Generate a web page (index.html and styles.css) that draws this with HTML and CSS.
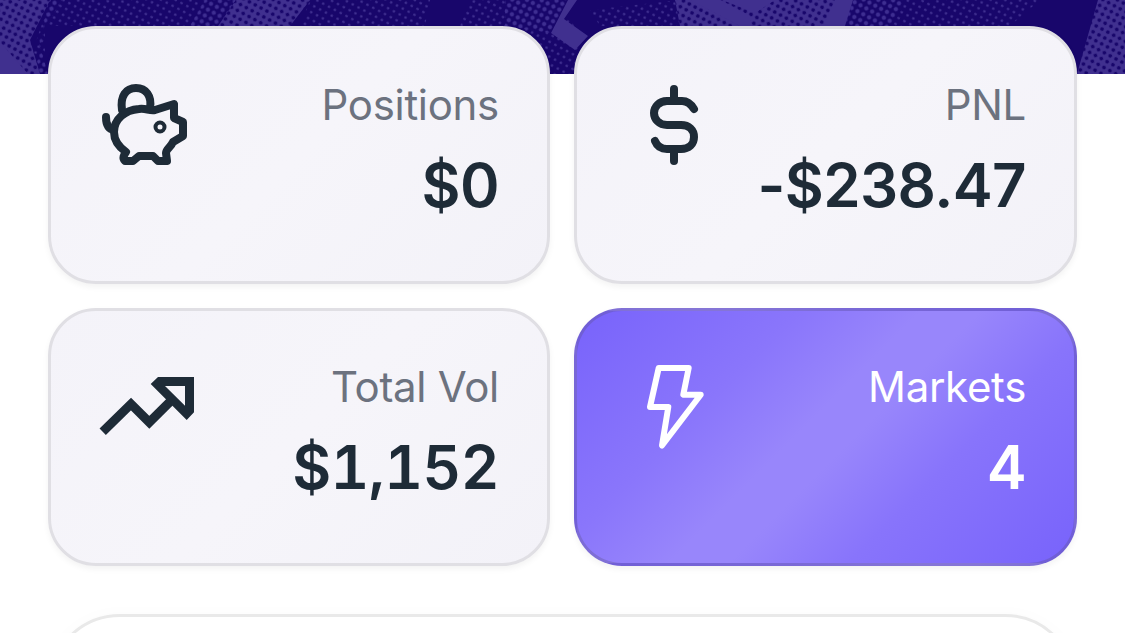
FILE: index.html
```html
<!DOCTYPE html>
<html lang="en">
  <head>
    <meta charset="UTF-8" />
    <title>Profile</title>
    <link rel="stylesheet" href="styles.css">
  </head>
  <body>
    <div class="page">
      <svg class="banner" viewBox="0 0 1125 74" aria-hidden="true">
        <defs>
          <pattern id="dots" width="6.6" height="6.6" patternUnits="userSpaceOnUse" patternTransform="rotate(28)">
            <circle cx="3.3" cy="3.3" r="1.25" fill="#423292" />
          </pattern>
          <pattern id="mid" width="6.6" height="6.6" patternUnits="userSpaceOnUse" patternTransform="rotate(28)">
            <circle cx="3.3" cy="3.3" r="2.1" fill="#3e2e91" />
          </pattern>
          <pattern id="holes" width="6.6" height="6.6" patternUnits="userSpaceOnUse" patternTransform="rotate(28)">
            <rect width="6.6" height="6.6" fill="#40308f" />
            <circle cx="3.3" cy="3.3" r="1.9" fill="#18066b" />
          </pattern>
        </defs>
        <rect width="1125" height="74" fill="#18066b" />
        <path d="M50 0H205L190 26H45V74H25ZM310 0H430L425 26H300ZM470 0H560L600 74H540L500 26H460ZM590 10L680 0L690 26H600ZM850 0H1040L1010 26H840Z" fill="url(#dots)" />
        <path d="M48 0H62L38 40L48 74H36ZM205 0H236L218 26H190ZM505 0H568L551 33L505 26ZM853 0H905L890 26H845Z" fill="url(#mid)" />
        <path d="M0 0H50L30 40L40 74H0ZM218 26L236 0H310L290 26ZM675 0H840L825 26H680ZM1098 0H1125V74H1077Z" fill="url(#holes)" />
        <path d="M0 42L28 74H0ZM568 0H577L564 19L588 36L575 50L551 33ZM690 0H720L750 16V26H740ZM722 0H775L755 13ZM835 0H853L845 26H823Z" fill="#40308f" />
      </svg>

      <div class="stats">
        <div class="card">
          <svg class="icon" viewBox="0 0 108 100">
            <path d="M23 42C21 28 27 20 37 20C47 20 53 28 51 40" />
            <path d="M7 49C7 56 9 61 15 62" />
            <path d="M15 64C15 51 26 42 40 41C47 40 50 43 56 42L75 36V50L84 54V68L74 74C72 79 67 81 67 85L68 93H59L54 88H40L34 93H26C23 90 25 87 27 84C20 79 15 73 15 64Z" />
            <circle class="eye" cx="61" cy="59" r="4.5" />
          </svg>
          <div class="info">
            <span class="label">Positions</span>
            <span class="value">$0</span>
          </div>
        </div>

        <div class="card">
          <svg class="icon" viewBox="0 0 108 100">
            <path d="M49 21V33M49 85V93M69 41C66 36 63 33 57 33H42C34 33 29 39 29 45S34 57 42 57H56C64 57 69 62 69 69S64 81 56 81H42C36 81 32 78 30 73" />
          </svg>
          <div class="info">
            <span class="label">PNL</span>
            <span class="value">-$238.47</span>
          </div>
        </div>

        <div class="card">
          <svg class="icon trend" viewBox="0 0 108 100">
            <path d="M3.7 81.7L32 54L50.3 72.3L71 51.7" />
            <path class="arrow" d="M51.7 34L59 27H95V62.3L87.7 70ZM66 36L86 55.7V36Z" />
          </svg>
          <div class="info">
            <span class="label">Total Vol</span>
            <span class="value wide">$1,152</span>
          </div>
        </div>

        <div class="card active">
          <svg class="icon bolt" viewBox="0 0 108 100">
            <path d="M33.7 18H63.7L58.3 44.7H75.7L37 95.5L43.3 57H25Z" />
          </svg>
          <div class="info">
            <span class="label">Markets</span>
            <span class="value">4</span>
          </div>
        </div>
      </div>

      <div class="panel"></div>
    </div>
  </body>
</html>
```
FILE: styles.css
```css
* {
  box-sizing: border-box;
}
body {
  margin: 0;
  background-color: #fff;
  font-family: Inter, "Liberation Sans", sans-serif;
  color: #1e2b37;
}
.page {
  position: relative;
  height: 633px;
  padding: 26px 48px 0;
  overflow: hidden;
}
/* the banner runs behind the top row of cards */
.banner {
  position: absolute;
  top: 0;
  left: 0;
  width: 1125px;
  height: 74px;
}
.stats {
  position: relative;
  display: grid;
  grid-template-columns: 502px 1fr;
  gap: 24px;
}
.card {
  display: flex;
  justify-content: space-between;
  height: 258px;
  padding: 45px 48px;
  border: 3px solid #e0dfe4;
  border-radius: 48px;
  background: linear-gradient(135deg, #f4f3f9, #f6f5fa 50%, #f3f2f8);
  box-shadow: 0 3px 6px rgba(0, 0, 0, 0.05);
}
.icon {
  width: 108px;
  height: 100px;
  margin-top: -6px;
  overflow: visible;
  fill: none;
  stroke: #1e2b37;
  stroke-width: 8;
  stroke-linecap: round;
  stroke-linejoin: round;
}
.eye {
  stroke-width: 4;
}
.trend {
  stroke-width: 9;
  stroke-linecap: butt;
  stroke-linejoin: miter;
}
.arrow {
  fill: #1e2b37;
  fill-rule: evenodd;
  stroke: none;
}
.bolt {
  stroke: #fff;
  stroke-width: 6;
}
.info {
  display: flex;
  flex-direction: column;
  align-items: flex-end;
}
.label {
  margin-top: 1px;
  font-size: 42px;
  line-height: 60px;
  letter-spacing: -0.3px;
  color: #6c727f;
}
.value {
  margin-top: 12px;
  font-size: 60px;
  font-weight: 600;
  line-height: 76px;
  letter-spacing: -0.6px;
  font-feature-settings: "calt" 0;
}
.wide {
  font-variant-numeric: tabular-nums;
}
.active {
  border-color: rgba(90, 80, 130, 0.3);
  background: linear-gradient(135deg, #7863fb, #8a76fb 30%, #9886fb 46%, #9886fb 54%, #8874fb 70%, #7863fb);
  color: #fff;
}
.active .label {
  color: #fff;
}
.panel {
  height: 200px;
  margin-top: 48px;
  border: 3px solid #e9e9e9;
  border-radius: 72px;
  box-shadow: 0 0 18px rgba(0, 0, 0, 0.02);
}
```
